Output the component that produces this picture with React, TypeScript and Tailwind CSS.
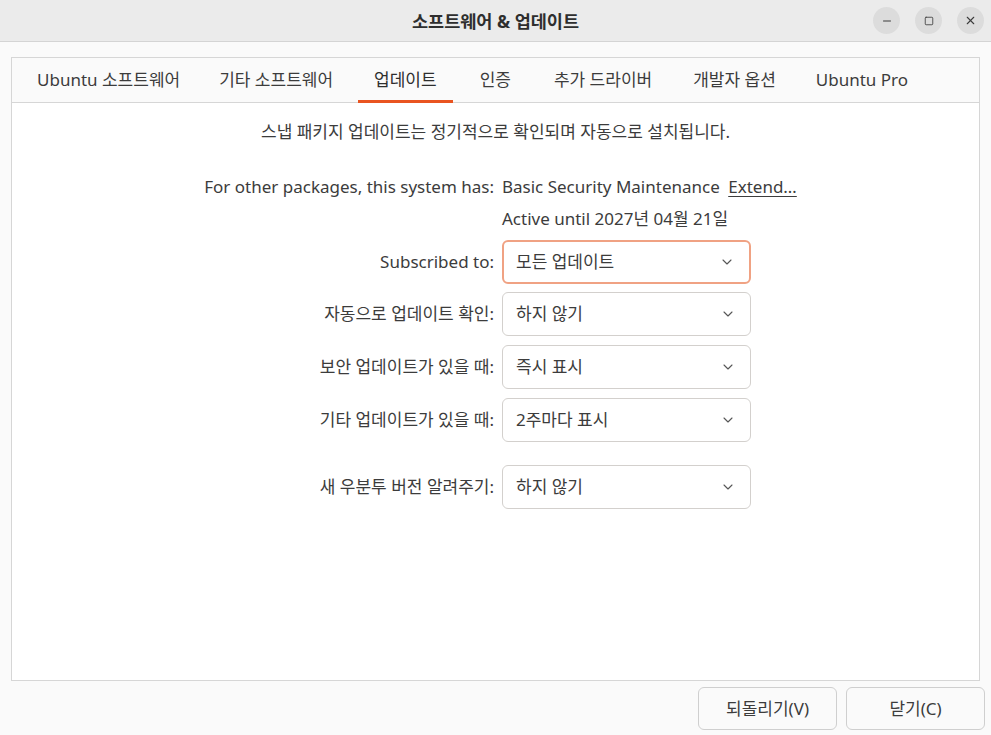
import { ChevronDown, Minus, Square, X } from 'lucide-react';

const font = { fontFamily: '"Noto Sans", "Noto Sans CJK KR", sans-serif' };

const tabs = [
  { label: 'Ubuntu 소프트웨어', gap: 'mr-[7px]' },
  { label: '기타 소프트웨어', gap: 'mr-[9px]' },
  { label: '업데이트', gap: 'mr-[11px]' },
  { label: '인증', gap: 'mr-[11px]' },
  { label: '추가 드라이버', gap: 'mr-[9px]' },
  { label: '개발자 옵션', gap: 'mr-[8px]' },
  { label: 'Ubuntu Pro', gap: 'mr-[8px]' },
];

function Select({ value, focused }: { value: string; focused?: boolean }) {
  return (
    <div
      className={`flex h-[44px] w-[249px] items-center justify-between rounded-[6px] bg-white pr-[14px] ${
        focused ? 'border-2 border-[#f0a283] pl-[12px]' : 'border border-[#d3d0cd] pl-[13px]'
      }`}
    >
      <span>{value}</span>
      <ChevronDown size={16} strokeWidth={1.6} className="text-[#555]" />
    </div>
  );
}

function Row({ label, value, focused, className = '' }: { label: string; value: string; focused?: boolean; className?: string }) {
  return (
    <div className={`flex items-center ${className}`}>
      <div className="w-[490px] pr-[8px] text-right">{label}</div>
      <Select value={value} focused={focused} />
    </div>
  );
}

export default function App() {
  return (
    <div className="flex h-[735px] w-[991px] flex-col bg-[#fafafa] text-[17px] leading-[20px] text-[#3c3c3c]" style={font}>
      <div className="relative flex h-[42px] shrink-0 items-center justify-center border-b border-[#d4d4d4] bg-[#ebebeb]">
        <span className="text-[17.5px] font-bold text-[#2e2e2e]">소프트웨어 &amp; 업데이트</span>
        <div className="absolute right-[7px] top-[7px] flex gap-[15px]">
          <div className="flex h-[27px] w-[27px] items-center justify-center rounded-full bg-[#dcdcdc]">
            <Minus size={12} strokeWidth={2} />
          </div>
          <div className="flex h-[27px] w-[27px] items-center justify-center rounded-full bg-[#dcdcdc]">
            <Square size={10} strokeWidth={2} />
          </div>
          <div className="flex h-[27px] w-[27px] items-center justify-center rounded-full bg-[#dcdcdc]">
            <X size={13} strokeWidth={2} />
          </div>
        </div>
      </div>

      <div className="flex flex-1 flex-col px-[11px] pt-[15px]">
        <div className="flex h-[624px] flex-col border border-[#d6d6d6]">
          <div className="flex h-[45px] shrink-0 items-stretch border-b border-[#d6d6d6] bg-[#fafafa] pl-[9px]">
            {tabs.map((t) => (
              <div key={t.label} className={`relative flex items-center px-[16px] ${t.gap}`}>
                <span className={t.label === '업데이트' ? 'text-[#2e2e2e]' : ''}>{t.label}</span>
                {t.label === '업데이트' && <div className="absolute bottom-[-1px] left-0 right-0 h-[3px] bg-[#e95420]" />}
              </div>
            ))}
          </div>

          <div className="flex flex-1 flex-col bg-white pt-[19px]">
            <div className="text-center">스냅 패키지 업데이트는 정기적으로 확인되며 자동으로 설치됩니다.</div>

            <div className="mt-[35px] flex">
              <div className="w-[490px] pr-[8px] text-right">For other packages, this system has:</div>
              <div>
                Basic Security Maintenance <span className="ml-[4px] underline underline-offset-[3px]">Extend…</span>
              </div>
            </div>
            <div className="mt-[12px] pl-[490px]">Active until 2027년 04월 21일</div>

            <Row className="mt-[11px]" label="Subscribed to:" value="모든 업데이트" focused />
            <Row className="mt-[8px]" label="자동으로 업데이트 확인:" value="하지 않기" />
            <Row className="mt-[9px]" label="보안 업데이트가 있을 때:" value="즉시 표시" />
            <Row className="mt-[9px]" label="기타 업데이트가 있을 때:" value="2주마다 표시" />
            <Row className="mt-[23px]" label="새 우분투 버전 알려주기:" value="하지 않기" />
          </div>
        </div>

        <div className="flex justify-end gap-[9px] pt-[6px]">
          <button className="h-[43px] w-[139px] rounded-[6px] border border-[#cfcfcf] bg-[#fafafa]">되돌리기(V)</button>
          <button className="mr-[-5px] h-[43px] w-[139px] rounded-[6px] border border-[#cfcfcf] bg-[#fafafa]">닫기(C)</button>
        </div>
      </div>
    </div>
  );
}
